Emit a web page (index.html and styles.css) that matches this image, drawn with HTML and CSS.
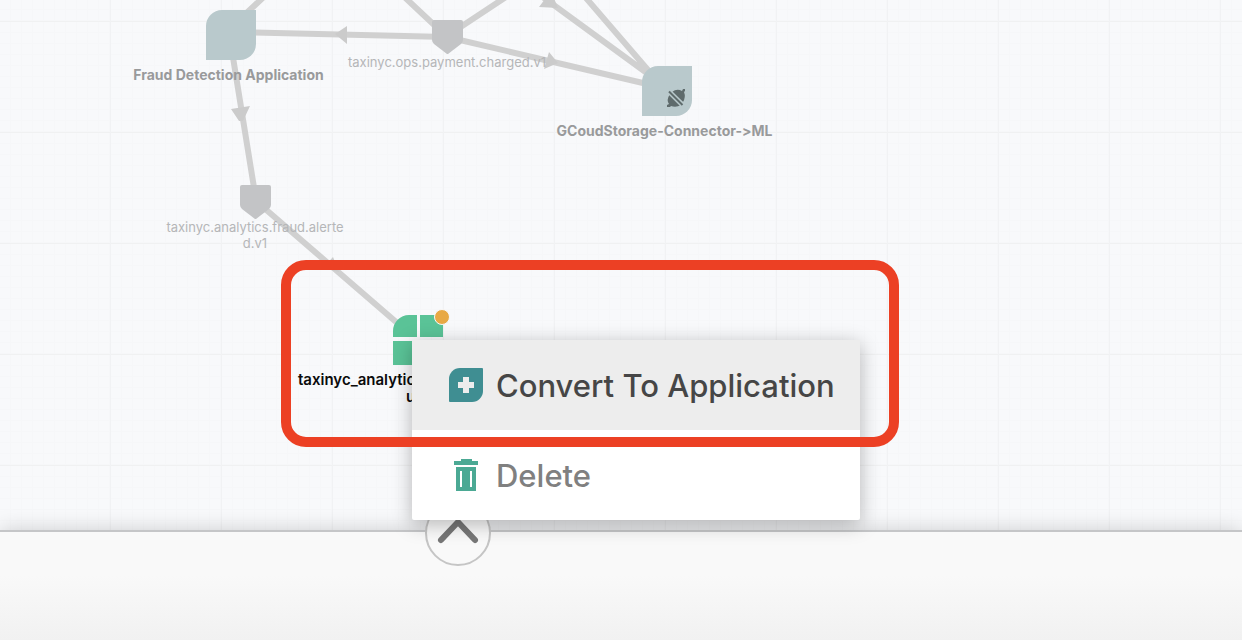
FILE: index.html
```html
<!DOCTYPE html>
<html lang="en">
<head>
<meta charset="utf-8">
<meta name="viewport" content="width=device-width, initial-scale=1">
<title>Topology</title>
<link rel="stylesheet" href="styles.css">
</head>
<body>
<main class="canvas">
  <svg class="edges" aria-hidden="true">
    <g class="edge-lines">
      <path d="M238 21L268 -7M231 32L447 37M447 37L398 -9M447 36L512 -7M447 37L660 87M666 87L540 -5M666 91L580 -9M231 45L256 200M256 201L410 334"/>
    </g>
    <g class="edge-arrows">
      <path d="M335 34L347 26V44ZM231 109L250 106L243 121H239ZM549 52L544 69L558 63ZM539 7L551 -9L558 8ZM333 257L323 268L339 272Z"/>
    </g>
  </svg>

  <div class="node app fraud">
    <svg class="leaf" viewBox="0 0 50 50" aria-hidden="true"><path d="M16 0H50V34A16 16 0 0 1 34 50H0V16A16 16 0 0 1 16 0Z"/></svg>
    <span class="label">Fraud Detection Application</span>
  </div>

  <div class="node topic charged">
    <svg class="shield" viewBox="0 0 31 34" aria-hidden="true"><path d="M2 0H29Q31 0 31 2V20Q31 22 29 24L16 34H15L2 24Q0 22 0 20V2Q0 0 2 0Z"/></svg>
    <span class="label">taxinyc.ops.payment.charged.v1</span>
  </div>

  <div class="node app storage">
    <svg class="leaf" viewBox="0 0 50 50" aria-hidden="true">
      <path d="M16 0H50V34A16 16 0 0 1 34 50H0V16A16 16 0 0 1 16 0Z"/>
      <g class="plug">
        <path d="M30 26Q35 22 40 25L41 23H43V25L42 26Q44 31 41 36Z"/>
        <path d="M28 28Q24 34 27 38L25 39V41H28L29 40Q34 42 39 39Z"/>
        <path class="gap" d="M26 24.500L41 39.500"/>
        <path class="slash" d="M27 25.500L40.500 39"/>
      </g>
    </svg>
    <span class="label">GCoudStorage-Connector-&gt;ML</span>
  </div>

  <div class="node topic alerted">
    <svg class="shield" viewBox="0 0 31 34" aria-hidden="true"><path d="M2 0H29Q31 0 31 2V20Q31 22 29 24L16 34H15L2 24Q0 22 0 20V2Q0 0 2 0Z"/></svg>
    <span class="label">taxinyc.analytics.fraud.alerte<br>d.v1</span>
  </div>

  <div class="node selected">
    <svg class="tiles" viewBox="0 0 58 56" aria-hidden="true">
      <path d="M0 28V22A16 16 0 0 1 16 6H24V28ZM27 6H50V28H27ZM0 32H24V56H0ZM27 32H50V40A16 16 0 0 1 34 56H27Z"/>
      <circle cx="49" cy="8" r="7.500"/>
    </svg>
    <span class="label">taxinyc_analytics</span>
    <span class="label second">us</span>
  </div>

  <ul class="menu">
    <li><button class="item active" type="button">
      <svg class="icon" viewBox="0 0 34 34" aria-hidden="true"><path class="teal" d="M11 0H33Q34 0 34 1V23A11 11 0 0 1 23 34H1Q0 34 0 33V11A11 11 0 0 1 11 0Z"/><path class="plus" d="M14 9H20V14H25V20H20V25H14V20H9V14H14Z"/></svg>
      Convert To Application</button></li>
    <li><button class="item" type="button">
      <svg class="icon" viewBox="0 0 34 34" aria-hidden="true"><path class="trash" fill-rule="evenodd" d="M12 1H23V3H29V7H5V3H12ZM7 9H27V33H7ZM11 13V29H13V13ZM21 13V29H23V13Z"/></svg>
      Delete</button></li>
  </ul>
  <div class="highlight"></div>
</main>
<footer class="panel">
  <button class="toggle" type="button" aria-label="Expand panel">
    <svg viewBox="0 0 62 62" aria-hidden="true"><path d="M14 38L31 20L48 38"/></svg>
  </button>
</footer>
</body>
</html>
```
FILE: styles.css
```css
* { box-sizing: border-box; }

body {
  margin: 0;
  min-height: 100vh;
  display: flex;
  flex-direction: column;
  font-family: Inter, Roboto, sans-serif;
  font-variant-ligatures: none;
  font-feature-settings: "calt" 0;
}

.canvas {
  flex: 1;
  position: relative;
  background-color: #f8f9fb;
  background-image:
    linear-gradient(to right, #f1f2f4 1px, transparent 1px),
    linear-gradient(to bottom, #f0f1f2 1px, transparent 1px),
    repeating-linear-gradient(to right, #f6f7f9 0 1px, transparent 1px 11px),
    repeating-linear-gradient(to bottom, #f6f7f9 0 1px, transparent 1px 11px);
  background-size: 111px 111px;
  background-position: 110px 21px;
}

.edges {
  position: absolute;
  inset: 0;
  width: 100%;
  height: 100%;
}
.edge-lines { fill: none; stroke: #d0d0d0; stroke-width: 6; }
.edge-arrows { fill: #cbcbcb; }

.node {
  position: absolute;
  width: 240px;
  display: flex;
  flex-direction: column;
  align-items: center;
}
.label { white-space: nowrap; text-align: center; }

.leaf { width: 50px; height: 50px; fill: #b9c9cc; }
.plug { fill: #5f6b6c; }
.gap { stroke: #b9c9cc; stroke-width: 5; }
.slash { stroke: #5f6b6c; stroke-width: 2; }
.app .label {
  margin-top: 6px;
  padding-right: 5px;
  font-size: 14px;
  font-weight: 700;
  line-height: 17px;
  color: #999a9b;
}
.shield { width: 31px; height: 34px; fill: #c3c4c6; }
.topic .label {
  font-size: 13px;
  line-height: 16px;
  color: #b5b6b8;
}

.fraud { left: 111px; top: 10px; }
.charged { left: 327px; top: 20px; }
.storage { left: 547px; top: 66px; }
.alerted { left: 135px; top: 185px; }

.selected { left: 298px; top: 309px; align-items: flex-start; }
.tiles {
  width: 58px;
  height: 56px;
  margin: 0 0 6px 95px;
  fill: #5ac397;
}
.tiles circle { fill: #e8a945; stroke: #f8f9fb; }
.selected .label {
  font-size: 15px;
  font-weight: 600;
  line-height: 17px;
  color: #0b0b0b;
}
.selected .second { padding-left: 108px; }

.menu {
  position: absolute;
  z-index: 2;
  left: 412px;
  top: 340px;
  margin: 0;
  padding: 0;
  list-style: none;
  background: #fff;
  border-radius: 2px;
  box-shadow: 0 4px 20px rgba(0, 0, 0, 0.28);
}
.item {
  display: flex;
  align-items: center;
  gap: 13px;
  width: 448px;
  height: 90px;
  padding: 0 0 0 37px;
  border: 0;
  background: transparent;
  font: 500 31px Inter, Roboto, sans-serif;
  color: #808080;
  white-space: nowrap;
  cursor: pointer;
}
.item.active { background: #ededed; color: #464646; }
.icon { width: 34px; height: 34px; }
.teal { fill: #3f8e92; }
.plus { fill: #ededed; }
.trash { fill: #4ba994; }

.highlight {
  position: absolute;
  z-index: 3;
  left: 281px;
  top: 260px;
  width: 618px;
  height: 187px;
  border: 10px solid #ec4024;
  border-radius: 25px;
  pointer-events: none;
}

.panel {
  position: relative;
  z-index: 1;
  padding: 54px 0;
  border-top: 2px solid #c5c6c8;
  background: linear-gradient(#f9f9f9 40%, #f1f1f1);
  box-shadow: 0 0 20px rgba(0, 0, 0, 0.18);
}
.toggle {
  position: absolute;
  left: 425px;
  top: -32px;
  width: 66px;
  height: 66px;
  padding: 0;
  border: 2px solid #c5c5c5;
  border-radius: 50%;
  background: #f9f9f9;
}
.toggle svg {
  display: block;
  fill: none;
  stroke: #777;
  stroke-width: 6;
  stroke-linecap: round;
}
```
